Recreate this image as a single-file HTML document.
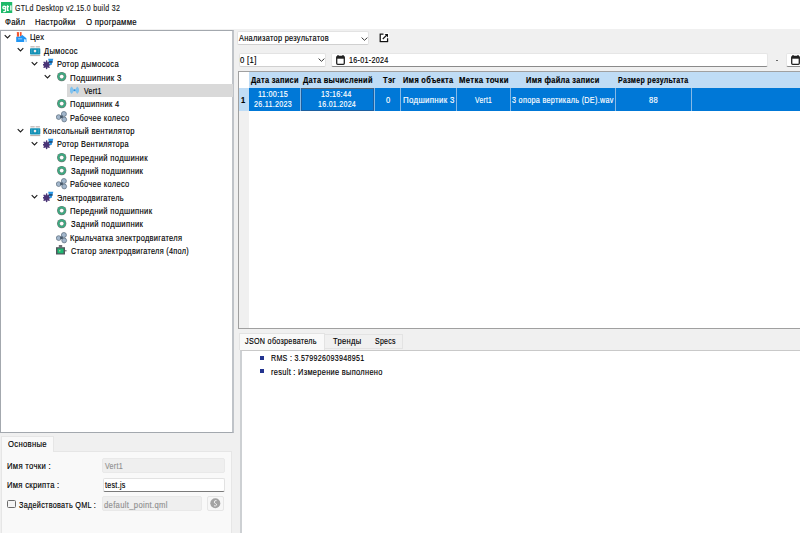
<!DOCTYPE html>
<html><head><meta charset="utf-8"><style>
*{box-sizing:border-box}
html,body{margin:0;padding:0;width:800px;height:533px;overflow:hidden;background:#f0f0f0;position:relative;font-family:"Liberation Sans",sans-serif}
.a{position:absolute}
.t{position:absolute;white-space:nowrap;line-height:10px;-webkit-text-stroke:0.15px currentColor;transform-origin:0 0;font-family:"Liberation Sans",sans-serif}
</style></head><body>
<!-- title & menu -->
<div class="a" style="left:0;top:0;width:800px;height:29px;background:#fff"></div>
<svg class="a" style="left:1px;top:2px" width="12" height="11" viewBox="0 0 12 11"><rect x="0" y="0" width="11.2" height="11" fill="#1fba6a"/>
<g fill="none" stroke="#fff" stroke-width="1.3"><circle cx="3.2" cy="5.6" r="1.35"/><path d="M4.6 4 V8.6 Q4.6 9.8 2.2 9.6"/><path d="M6.6 3.2 V8.4 H7.8 M5.6 4.7 H8"/></g>
<rect x="9.2" y="3.4" width="1.3" height="5" fill="#fff"/></svg>

<!-- tree panel -->
<div class="a" style="left:0;top:30px;width:234px;height:403px;background:#fff;border:1px solid #a3a8ae;border-right:2px solid #bfc3c8"></div>
<div class="a" style="left:67px;top:84.44px;width:166px;height:12.5px;background:#d9d9d9"></div>
<svg class="a" style="left:4px;top:34.00px" width="7" height="5" viewBox="0 0 7 5"><path d="M0.7 1.2 L3.5 3.9 L6.3 1.2" fill="none" stroke="#1a1a1a" stroke-width="1.1"/></svg>
<svg class="a" style="left:16px;top:31.00px" width="11" height="12" viewBox="0 0 11 12">
<rect x="0.9" y="1" width="2.1" height="4.8" rx="0.6" fill="#f2552f"/><rect x="3.9" y="1" width="1.7" height="4" rx="0.6" fill="#f2552f"/>
<path d="M0.2 5.8 L3.5 5.8 L6.3 4 L10.4 7.2 L10.4 11.1 L9.6 11.1 L9.6 8.6 L8 8.6 L8 11.1 L0.2 11.1 Z" fill="#2196f3"/>
<rect x="2" y="7.4" width="4.2" height="0.9" fill="#a7d3fb"/><rect x="8" y="8.6" width="1.6" height="2.5" fill="#d5eafc"/></svg>
<svg class="a" style="left:17.3px;top:47.36px" width="7" height="5" viewBox="0 0 7 5"><path d="M0.7 1.2 L3.5 3.9 L6.3 1.2" fill="none" stroke="#1a1a1a" stroke-width="1.1"/></svg>
<svg class="a" style="left:29.6px;top:44.66px" width="11" height="12" viewBox="0 0 11 12">
<rect x="0.4" y="1.3" width="4.3" height="1.1" fill="#b5aaa8"/><rect x="5.6" y="1.3" width="4.3" height="1.1" fill="#b5aaa8"/>
<rect x="0" y="3.2" width="10.3" height="6.2" rx="0.7" fill="#1390b5"/>
<circle cx="5" cy="6.1" r="1.3" fill="#f3ecea"/>
<rect x="1.3" y="4.6" width="0.9" height="0.9" fill="#6fc0dc"/><rect x="1.3" y="6.6" width="0.9" height="0.9" fill="#6fc0dc"/>
<rect x="7.9" y="4.6" width="0.9" height="0.9" fill="#6fc0dc"/><rect x="7.9" y="6.6" width="0.9" height="0.9" fill="#6fc0dc"/>
<rect x="0.2" y="10.1" width="10" height="1" fill="#b0a8a6"/></svg>
<svg class="a" style="left:30.9px;top:60.72px" width="7" height="5" viewBox="0 0 7 5"><path d="M0.7 1.2 L3.5 3.9 L6.3 1.2" fill="none" stroke="#1a1a1a" stroke-width="1.1"/></svg>
<svg class="a" style="left:43px;top:57.52px" width="12" height="12" viewBox="0 0 12 12">
<circle cx="3.5" cy="6.8" r="2.9" fill="#5a4388"/>
<g stroke="#4a3475" stroke-width="1.5" stroke-linecap="round"><path d="M3.6 3.1 V10.5"/><path d="M0.1 6.8 H6.9"/><path d="M1.1 4.3 L6 9.3"/><path d="M1.1 9.3 L5.9 4.4"/></g>
<path d="M5.1 0.8 L10.3 0.8 L8.6 7 L6.8 7 Z" fill="#2a96e6"/><rect x="5.7" y="3.3" width="3.9" height="1.3" fill="#1d3550"/></svg>
<svg class="a" style="left:44px;top:74.08px" width="7" height="5" viewBox="0 0 7 5"><path d="M0.7 1.2 L3.5 3.9 L6.3 1.2" fill="none" stroke="#1a1a1a" stroke-width="1.1"/></svg>
<svg class="a" style="left:56.6px;top:72.38px" width="10" height="10" viewBox="0 0 10 10">
<circle cx="4.7" cy="4.62" r="4.65" fill="#6f7a74"/><circle cx="4.7" cy="4.62" r="4.0" fill="#3aac82"/><circle cx="4.7" cy="4.62" r="2.35" fill="#70857b"/><circle cx="4.7" cy="4.62" r="1.85" fill="#fff"/></svg>
<svg class="a" style="left:70px;top:86.24px" width="10" height="9" viewBox="0 0 10 9">
<path d="M4.3 4.3 L1.8 0.6 A4.5 4.5 0 0 0 1.8 8.0 Z" fill="#80c2ee"/><path d="M4.7 4.3 L7.2 0.6 A4.5 4.5 0 0 1 7.2 8.0 Z" fill="#80c2ee"/>
<circle cx="4.5" cy="4.3" r="0.95" fill="#2a8fe2"/></svg>
<svg class="a" style="left:56.6px;top:99.10px" width="10" height="10" viewBox="0 0 10 10">
<circle cx="4.7" cy="4.62" r="4.65" fill="#6f7a74"/><circle cx="4.7" cy="4.62" r="4.0" fill="#3aac82"/><circle cx="4.7" cy="4.62" r="2.35" fill="#70857b"/><circle cx="4.7" cy="4.62" r="1.85" fill="#fff"/></svg>
<svg class="a" style="left:55.6px;top:111.46px" width="12" height="12" viewBox="0 0 12 12">
<g fill="#a3b7cc" stroke="#56687a" stroke-width="0.7"><circle cx="7.9" cy="3.0" r="2.5"/><circle cx="2.7" cy="6.1" r="2.4"/><circle cx="8.2" cy="8.5" r="2.4"/></g>
<circle cx="5.5" cy="5.8" r="1.5" fill="#46586a"/></svg>
<svg class="a" style="left:17.3px;top:127.52px" width="7" height="5" viewBox="0 0 7 5"><path d="M0.7 1.2 L3.5 3.9 L6.3 1.2" fill="none" stroke="#1a1a1a" stroke-width="1.1"/></svg>
<svg class="a" style="left:29.6px;top:124.82px" width="11" height="12" viewBox="0 0 11 12">
<rect x="0.4" y="1.3" width="4.3" height="1.1" fill="#b5aaa8"/><rect x="5.6" y="1.3" width="4.3" height="1.1" fill="#b5aaa8"/>
<rect x="0" y="3.2" width="10.3" height="6.2" rx="0.7" fill="#1390b5"/>
<circle cx="5" cy="6.1" r="1.3" fill="#f3ecea"/>
<rect x="1.3" y="4.6" width="0.9" height="0.9" fill="#6fc0dc"/><rect x="1.3" y="6.6" width="0.9" height="0.9" fill="#6fc0dc"/>
<rect x="7.9" y="4.6" width="0.9" height="0.9" fill="#6fc0dc"/><rect x="7.9" y="6.6" width="0.9" height="0.9" fill="#6fc0dc"/>
<rect x="0.2" y="10.1" width="10" height="1" fill="#b0a8a6"/></svg>
<svg class="a" style="left:30.9px;top:140.88px" width="7" height="5" viewBox="0 0 7 5"><path d="M0.7 1.2 L3.5 3.9 L6.3 1.2" fill="none" stroke="#1a1a1a" stroke-width="1.1"/></svg>
<svg class="a" style="left:43px;top:137.68px" width="12" height="12" viewBox="0 0 12 12">
<circle cx="3.5" cy="6.8" r="2.9" fill="#5a4388"/>
<g stroke="#4a3475" stroke-width="1.5" stroke-linecap="round"><path d="M3.6 3.1 V10.5"/><path d="M0.1 6.8 H6.9"/><path d="M1.1 4.3 L6 9.3"/><path d="M1.1 9.3 L5.9 4.4"/></g>
<path d="M5.1 0.8 L10.3 0.8 L8.6 7 L6.8 7 Z" fill="#2a96e6"/><rect x="5.7" y="3.3" width="3.9" height="1.3" fill="#1d3550"/></svg>
<svg class="a" style="left:56.6px;top:152.54px" width="10" height="10" viewBox="0 0 10 10">
<circle cx="4.7" cy="4.62" r="4.65" fill="#6f7a74"/><circle cx="4.7" cy="4.62" r="4.0" fill="#3aac82"/><circle cx="4.7" cy="4.62" r="2.35" fill="#70857b"/><circle cx="4.7" cy="4.62" r="1.85" fill="#fff"/></svg>
<svg class="a" style="left:56.6px;top:165.90px" width="10" height="10" viewBox="0 0 10 10">
<circle cx="4.7" cy="4.62" r="4.65" fill="#6f7a74"/><circle cx="4.7" cy="4.62" r="4.0" fill="#3aac82"/><circle cx="4.7" cy="4.62" r="2.35" fill="#70857b"/><circle cx="4.7" cy="4.62" r="1.85" fill="#fff"/></svg>
<svg class="a" style="left:55.6px;top:178.26px" width="12" height="12" viewBox="0 0 12 12">
<g fill="#a3b7cc" stroke="#56687a" stroke-width="0.7"><circle cx="7.9" cy="3.0" r="2.5"/><circle cx="2.7" cy="6.1" r="2.4"/><circle cx="8.2" cy="8.5" r="2.4"/></g>
<circle cx="5.5" cy="5.8" r="1.5" fill="#46586a"/></svg>
<svg class="a" style="left:30.9px;top:194.32px" width="7" height="5" viewBox="0 0 7 5"><path d="M0.7 1.2 L3.5 3.9 L6.3 1.2" fill="none" stroke="#1a1a1a" stroke-width="1.1"/></svg>
<svg class="a" style="left:43px;top:191.12px" width="12" height="12" viewBox="0 0 12 12">
<circle cx="3.5" cy="6.8" r="2.9" fill="#5a4388"/>
<g stroke="#4a3475" stroke-width="1.5" stroke-linecap="round"><path d="M3.6 3.1 V10.5"/><path d="M0.1 6.8 H6.9"/><path d="M1.1 4.3 L6 9.3"/><path d="M1.1 9.3 L5.9 4.4"/></g>
<path d="M5.1 0.8 L10.3 0.8 L8.6 7 L6.8 7 Z" fill="#2a96e6"/><rect x="5.7" y="3.3" width="3.9" height="1.3" fill="#1d3550"/></svg>
<svg class="a" style="left:56.6px;top:205.98px" width="10" height="10" viewBox="0 0 10 10">
<circle cx="4.7" cy="4.62" r="4.65" fill="#6f7a74"/><circle cx="4.7" cy="4.62" r="4.0" fill="#3aac82"/><circle cx="4.7" cy="4.62" r="2.35" fill="#70857b"/><circle cx="4.7" cy="4.62" r="1.85" fill="#fff"/></svg>
<svg class="a" style="left:56.6px;top:219.34px" width="10" height="10" viewBox="0 0 10 10">
<circle cx="4.7" cy="4.62" r="4.65" fill="#6f7a74"/><circle cx="4.7" cy="4.62" r="4.0" fill="#3aac82"/><circle cx="4.7" cy="4.62" r="2.35" fill="#70857b"/><circle cx="4.7" cy="4.62" r="1.85" fill="#fff"/></svg>
<svg class="a" style="left:55.6px;top:231.70px" width="12" height="12" viewBox="0 0 12 12">
<g fill="#a3b7cc" stroke="#56687a" stroke-width="0.7"><circle cx="7.9" cy="3.0" r="2.5"/><circle cx="2.7" cy="6.1" r="2.4"/><circle cx="8.2" cy="8.5" r="2.4"/></g>
<circle cx="5.5" cy="5.8" r="1.5" fill="#46586a"/></svg>
<svg class="a" style="left:56px;top:245.46px" width="11" height="11" viewBox="0 0 11 11">
<rect x="2.8" y="0" width="3.4" height="2.4" fill="#6d7176"/>
<rect x="0" y="2.2" width="9" height="7.3" fill="#51565c"/><rect x="1.5" y="3.5" width="6" height="4.8" fill="#1db872"/>
<circle cx="3.8" cy="5.8" r="0.7" fill="#e8d0a0"/><rect x="9" y="5.3" width="1.6" height="1" fill="#51565c"/></svg>

<!-- bottom left tab panel -->
<div class="a" style="left:1px;top:451px;width:231px;height:90px;background:#f9f9f9;border:1px solid #e6e6e6"></div>
<div class="a" style="left:1px;top:436px;width:53px;height:16px;background:#f9f9f9;border:1px solid #e6e6e6;border-bottom:none"></div>
<div class="a" style="left:102px;top:458px;width:123px;height:15px;background:#efefef;border:1px solid #e9e9e9;border-radius:2px"></div>
<div class="a" style="left:103px;top:478px;width:122px;height:14px;background:#fff;border:1px solid #e2e2e2;border-bottom:1px solid #7a7a7a;border-radius:2px"></div>
<div class="a" style="left:102px;top:496px;width:99.5px;height:15px;background:#efefef;border:1px solid #e9e9e9;border-radius:2px"></div>
<div class="a" style="left:206.5px;top:496px;width:17px;height:15px;background:#f7f7f7;border:1px solid #e6e6e6;border-radius:2px"></div>
<svg class="a" style="left:210px;top:498.3px" width="11" height="11" viewBox="0 0 11 11"><circle cx="5.3" cy="5.2" r="5" fill="#a3a3a3"/><path d="M6.6 2.6 Q4.3 2.2 4.3 4 Q4.3 5.3 5.5 5.5 Q6.8 5.8 6.5 7.2 Q6 8.2 4 7.8" stroke="#f4f4f4" stroke-width="0.9" fill="none"/></svg>
<div class="a" style="left:7px;top:499.5px;width:9px;height:8.5px;background:#f4f4f4;border:1px solid #6a6a6a;border-radius:1.5px"></div>

<!-- right top controls -->
<div class="a" style="left:237px;top:31px;width:132px;height:14px;background:#fff;border:1px solid #e3e3e3;border-bottom-color:#d0d0d0;border-radius:2px"></div>
<svg class="a" style="left:361px;top:36.5px" width="7" height="4" viewBox="0 0 7 4"><path d="M0.6 0.6 L3.5 3.3 L6.4 0.6" fill="none" stroke="#3a3a3a" stroke-width="1"/></svg>
<svg class="a" style="left:378.5px;top:33px" width="10" height="10" viewBox="0 0 10 10"><rect x="0" y="0" width="10" height="10" fill="#fff"/>
<path d="M4.5 1.2 H1.2 V8.6 H8.6 V5.3" fill="none" stroke="#111" stroke-width="1.3"/><path d="M3.8 6 L8.2 1.6" stroke="#111" stroke-width="1.2"/><path d="M5.6 1 H9 V4.4 Z" fill="#111"/></svg>
<div class="a" style="left:238.5px;top:52.5px;width:87px;height:14px;background:#fff;border:1px solid #e3e3e3;border-bottom-color:#d0d0d0;border-radius:2px"></div>
<svg class="a" style="left:318px;top:58px" width="7" height="4" viewBox="0 0 7 4"><path d="M0.6 0.6 L3.5 3.3 L6.4 0.6" fill="none" stroke="#3a3a3a" stroke-width="1"/></svg>
<div class="a" style="left:331px;top:53px;width:437px;height:14px;background:#fff;border:1px solid #e6e6e6;border-bottom:1px solid #8a8a8a;border-radius:2px"></div>
<svg class="a" style="left:336px;top:55px" width="9" height="10" viewBox="0 0 9 10"><path d="M2 0 V2 M7 0 V2" stroke="#222" stroke-width="1.2"/><rect x="0.7" y="1.5" width="7.6" height="7.8" rx="1" fill="none" stroke="#222" stroke-width="1.3"/><rect x="0.7" y="1.5" width="7.6" height="2.2" fill="#222"/></svg>
<div class="a" style="left:776px;top:59.5px;width:2px;height:1px;background:#6a6a6a"></div>
<div class="a" style="left:786px;top:53px;width:20px;height:14px;background:#fff;border:1px solid #e6e6e6;border-bottom:1px solid #8a8a8a;border-radius:2px"></div>
<svg class="a" style="left:791px;top:55px" width="9" height="10" viewBox="0 0 9 10"><path d="M2 0 V2 M7 0 V2" stroke="#222" stroke-width="1.2"/><rect x="0.7" y="1.5" width="7.6" height="7.8" rx="1" fill="none" stroke="#222" stroke-width="1.3"/><rect x="0.7" y="1.5" width="7.6" height="2.2" fill="#222"/></svg>

<!-- table -->
<div class="a" style="left:238px;top:71px;width:570px;height:258px;background:#fff;border:1px solid #a0a0a0"></div>
<div class="a" style="left:239px;top:111px;width:10px;height:217px;background:#f0f0f0"></div>
<div class="a" style="left:249px;top:72px;width:560px;height:16px;background:#bfdcf5"></div>
<div class="a" style="left:239px;top:88px;width:10px;height:23px;background:#bfdcf5"></div>
<div class="a" style="left:249px;top:88px;width:560px;height:23px;background:#0078d7"></div>
<div class="a" style="left:300px;top:88px;width:1px;height:23px;background:#86b9e6"></div>
<div class="a" style="left:374px;top:88px;width:1px;height:23px;background:#86b9e6"></div>
<div class="a" style="left:400px;top:88px;width:1px;height:23px;background:#86b9e6"></div>
<div class="a" style="left:456px;top:88px;width:1px;height:23px;background:#86b9e6"></div>
<div class="a" style="left:510px;top:88px;width:1px;height:23px;background:#86b9e6"></div>
<div class="a" style="left:615px;top:88px;width:1px;height:23px;background:#86b9e6"></div>
<div class="a" style="left:691px;top:88px;width:1px;height:23px;background:#86b9e6"></div>
<div class="a" style="left:301px;top:88px;width:73px;height:23px;border:1px solid #1d5f9f;border-top-color:#4f6377"></div>

<!-- tabs -->
<div class="a" style="left:240px;top:350px;width:570px;height:190px;background:#fff;border:1px solid #c9c9c9;border-left:2px solid #cdd0d3"></div>
<div class="a" style="left:239px;top:333px;width:86px;height:17px;background:#f9f9f9;border:1px solid #e3e3e3;border-bottom:none"></div>
<div class="a" style="left:325px;top:334px;width:42.5px;height:15px;background:#f0f0f0;border:1px solid #e3e3e3;border-left:none"></div>
<div class="a" style="left:367px;top:334px;width:35.5px;height:15px;background:#f0f0f0;border:1px solid #e3e3e3;border-left:none"></div>
<div class="a" style="left:260px;top:356px;width:4px;height:4px;background:#23348f"></div>
<div class="a" style="left:260px;top:369px;width:4px;height:4px;background:#23348f"></div>

<div class="t" style="left:15.15px;top:3px;font-size:8.6px;letter-spacing:0.35px;font-weight:400;color:#1b1b1b;transform:scaleX(0.817)">GTLd Desktop v2.15.0 build 32</div>
<div class="t" style="left:4.53px;top:17px;font-size:8.6px;letter-spacing:0.35px;font-weight:400;color:#000;transform:scaleX(0.902)">Файл</div>
<div class="t" style="left:35.08px;top:17px;font-size:8.6px;letter-spacing:0.35px;font-weight:400;color:#000;transform:scaleX(0.900)">Настройки</div>
<div class="t" style="left:85.61px;top:17px;font-size:8.6px;letter-spacing:0.35px;font-weight:400;color:#000;transform:scaleX(0.904)">О программе</div>
<div class="t" style="left:29.90px;top:32px;font-size:8.6px;letter-spacing:0.35px;font-weight:400;color:#000;transform:scaleX(0.875)">Цех</div>
<div class="t" style="left:43.92px;top:46px;font-size:8.6px;letter-spacing:0.35px;font-weight:400;color:#000;transform:scaleX(0.875)">Дымосос</div>
<div class="t" style="left:56.60px;top:59px;font-size:8.6px;letter-spacing:0.35px;font-weight:400;color:#000;transform:scaleX(0.875)">Ротор дымососа</div>
<div class="t" style="left:70.37px;top:73px;font-size:8.6px;letter-spacing:0.35px;font-weight:400;color:#000;transform:scaleX(0.916)">Подшипник 3</div>
<div class="t" style="left:83.93px;top:86px;font-size:8.6px;letter-spacing:0.35px;font-weight:400;color:#000;transform:scaleX(0.810)">Vert1</div>
<div class="t" style="left:70.40px;top:99px;font-size:8.6px;letter-spacing:0.35px;font-weight:400;color:#000;transform:scaleX(0.875)">Подшипник 4</div>
<div class="t" style="left:70.40px;top:113px;font-size:8.6px;letter-spacing:0.35px;font-weight:400;color:#000;transform:scaleX(0.869)">Рабочее колесо</div>
<div class="t" style="left:43.39px;top:126px;font-size:8.6px;letter-spacing:0.35px;font-weight:400;color:#000;transform:scaleX(0.881)">Консольный вентилятор</div>
<div class="t" style="left:56.61px;top:139px;font-size:8.6px;letter-spacing:0.35px;font-weight:400;color:#000;transform:scaleX(0.860)">Ротор Вентилятора</div>
<div class="t" style="left:70.39px;top:153px;font-size:8.6px;letter-spacing:0.35px;font-weight:400;color:#000;transform:scaleX(0.892)">Передний подшиник</div>
<div class="t" style="left:70.77px;top:166px;font-size:8.6px;letter-spacing:0.35px;font-weight:400;color:#000;transform:scaleX(0.888)">Задний подшипник</div>
<div class="t" style="left:70.40px;top:179px;font-size:8.6px;letter-spacing:0.35px;font-weight:400;color:#000;transform:scaleX(0.869)">Рабочее колесо</div>
<div class="t" style="left:56.83px;top:193px;font-size:8.6px;letter-spacing:0.35px;font-weight:400;color:#000;transform:scaleX(0.856)">Электродвигатель</div>
<div class="t" style="left:70.39px;top:206px;font-size:8.6px;letter-spacing:0.35px;font-weight:400;color:#000;transform:scaleX(0.892)">Передний подшипник</div>
<div class="t" style="left:70.77px;top:219px;font-size:8.6px;letter-spacing:0.35px;font-weight:400;color:#000;transform:scaleX(0.888)">Задний подшипник</div>
<div class="t" style="left:70.40px;top:233px;font-size:8.6px;letter-spacing:0.35px;font-weight:400;color:#000;transform:scaleX(0.867)">Крыльчатка электродвигателя</div>
<div class="t" style="left:70.64px;top:246px;font-size:8.6px;letter-spacing:0.35px;font-weight:400;color:#000;transform:scaleX(0.848)">Статор электродвигателя (4пол)</div>
<div class="t" style="left:7.62px;top:439px;font-size:8.6px;letter-spacing:0.35px;font-weight:400;color:#000;transform:scaleX(0.894)">Основные</div>
<div class="t" style="left:6.88px;top:461px;font-size:8.6px;letter-spacing:0.35px;font-weight:400;color:#000;transform:scaleX(0.895)">Имя точки :</div>
<div class="t" style="left:6.89px;top:480px;font-size:8.6px;letter-spacing:0.35px;font-weight:400;color:#000;transform:scaleX(0.885)">Имя скрипта :</div>
<div class="t" style="left:19.28px;top:500px;font-size:8.6px;letter-spacing:0.35px;font-weight:400;color:#000;transform:scaleX(0.842)">Задействовать QML :</div>
<div class="t" style="left:104.53px;top:461px;font-size:8.6px;letter-spacing:0.35px;font-weight:400;color:#8f8f8f;transform:scaleX(0.824)">Vert1</div>
<div class="t" style="left:104.53px;top:480px;font-size:8.6px;letter-spacing:0.35px;font-weight:400;color:#000;transform:scaleX(0.828)">test.js</div>
<div class="t" style="left:104.29px;top:500px;font-size:8.6px;letter-spacing:0.35px;font-weight:400;color:#8f8f8f;transform:scaleX(0.893)">default_point.qml</div>
<div class="t" style="left:239.40px;top:33px;font-size:8.6px;letter-spacing:0.35px;font-weight:400;color:#000;transform:scaleX(0.857)">Анализатор результатов</div>
<div class="t" style="left:240.44px;top:55px;font-size:8.6px;letter-spacing:0.35px;font-weight:400;color:#000;transform:scaleX(0.901)">0 [1]</div>
<div class="t" style="left:348.93px;top:55px;font-size:8.6px;letter-spacing:0.35px;font-weight:400;color:#000;transform:scaleX(0.834)">16-01-2024</div>
<div class="t" style="left:250.93px;top:75px;font-size:8.6px;letter-spacing:0.35px;font-weight:700;color:#000;transform:scaleX(0.861)">Дата записи</div>
<div class="t" style="left:303.43px;top:75px;font-size:8.6px;letter-spacing:0.35px;font-weight:700;color:#000;transform:scaleX(0.861)">Дата вычислений</div>
<div class="t" style="left:382.92px;top:75px;font-size:8.6px;letter-spacing:0.35px;font-weight:700;color:#000;transform:scaleX(0.875)">Тэг</div>
<div class="t" style="left:403.48px;top:75px;font-size:8.6px;letter-spacing:0.35px;font-weight:700;color:#000;transform:scaleX(0.860)">Имя объекта</div>
<div class="t" style="left:459.06px;top:75px;font-size:8.6px;letter-spacing:0.35px;font-weight:700;color:#000;transform:scaleX(0.903)">Метка точки</div>
<div class="t" style="left:526.48px;top:75px;font-size:8.6px;letter-spacing:0.35px;font-weight:700;color:#000;transform:scaleX(0.864)">Имя файла записи</div>
<div class="t" style="left:618.41px;top:75px;font-size:8.6px;letter-spacing:0.35px;font-weight:700;color:#000;transform:scaleX(0.819)">Размер результата</div>
<div class="t" style="left:241.05px;top:95px;font-size:8.6px;letter-spacing:0.35px;font-weight:700;color:#000;transform:scaleX(0.875)">1</div>
<div class="t" style="left:257.92px;top:89px;font-size:8.6px;letter-spacing:0.35px;font-weight:400;color:#fff;transform:scaleX(0.847)">11:00:15</div>
<div class="t" style="left:254.14px;top:99px;font-size:8.6px;letter-spacing:0.35px;font-weight:400;color:#fff;transform:scaleX(0.827)">26.11.2023</div>
<div class="t" style="left:321.42px;top:89px;font-size:8.6px;letter-spacing:0.35px;font-weight:400;color:#fff;transform:scaleX(0.843)">13:16:44</div>
<div class="t" style="left:317.94px;top:99px;font-size:8.6px;letter-spacing:0.35px;font-weight:400;color:#fff;transform:scaleX(0.818)">16.01.2024</div>
<div class="t" style="left:385.70px;top:95px;font-size:8.6px;letter-spacing:0.35px;font-weight:400;color:#fff;transform:scaleX(0.875)">0</div>
<div class="t" style="left:402.97px;top:95px;font-size:8.6px;letter-spacing:0.35px;font-weight:400;color:#fff;transform:scaleX(0.914)">Подшипник 3</div>
<div class="t" style="left:474.93px;top:95px;font-size:8.6px;letter-spacing:0.35px;font-weight:400;color:#fff;transform:scaleX(0.782)">Vert1</div>
<div class="t" style="left:512.11px;top:95px;font-size:8.6px;letter-spacing:0.35px;font-weight:400;color:#fff;transform:scaleX(0.841)">3 опора вертикаль (DE).wav</div>
<div class="t" style="left:648.70px;top:95px;font-size:8.6px;letter-spacing:0.35px;font-weight:400;color:#fff;transform:scaleX(0.875)">88</div>
<div class="t" style="left:245.36px;top:336px;font-size:8.6px;letter-spacing:0.35px;font-weight:400;color:#000;transform:scaleX(0.835)">JSON обозреватель</div>
<div class="t" style="left:332.85px;top:336px;font-size:8.6px;letter-spacing:0.35px;font-weight:400;color:#000;transform:scaleX(0.882)">Тренды</div>
<div class="t" style="left:375.25px;top:336px;font-size:8.6px;letter-spacing:0.35px;font-weight:400;color:#000;transform:scaleX(0.809)">Specs</div>
<div class="t" style="left:270.83px;top:353px;font-size:8.6px;letter-spacing:0.35px;font-weight:400;color:#000;transform:scaleX(0.825)">RMS : 3.579926093948951</div>
<div class="t" style="left:270.88px;top:367px;font-size:8.6px;letter-spacing:0.35px;font-weight:400;color:#000;transform:scaleX(0.865)">result : Измерение выполнено</div>
</body></html>
